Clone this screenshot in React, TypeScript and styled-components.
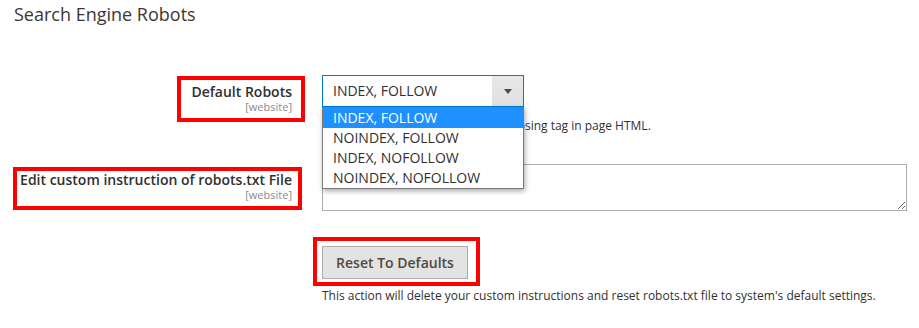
import styled, { createGlobalStyle } from "styled-components";

const GlobalStyle = createGlobalStyle`
    body {
        margin: 0;
        background: #fff;
        font-family: "Open Sans", "Liberation Sans", sans-serif;
        color: #303030;
    }
`;

const robotOptions = ["INDEX, FOLLOW", "NOINDEX, FOLLOW", "INDEX, NOFOLLOW", "NOINDEX, NOFOLLOW"];

const Page = styled.div`
    width: 919px;
    height: 328px;
    overflow: hidden;
    box-sizing: border-box;
`;

const SectionTitle = styled.h2`
    margin: 0;
    padding: 2px 0 0 14px;
    font-size: 18px;
    font-weight: 400;
    line-height: 25px;
    color: #41362f;
`;

const Fieldset = styled.div`
    display: flex;
    flex-direction: column;
    margin-top: 48px;
`;

const Row = styled.div<{ $top?: number }>`
    display: grid;
    grid-template-columns: 322px 585px;
    align-items: start;
    margin-top: ${(p) => p.$top || 0}px;
`;

const LabelCell = styled.div<{ $right: number; $offset: number }>`
    display: flex;
    justify-content: flex-end;
    padding-right: ${(p) => p.$right}px;
    margin-top: ${(p) => p.$offset}px;
`;

const Highlight = styled.div<{ $pad: string; $shift?: number }>`
    display: inline-flex;
    flex-direction: column;
    align-items: flex-end;
    border: 4px solid #ff0000;
    padding: ${(p) => p.$pad};
    margin-left: ${(p) => p.$shift || 0}px;
`;

const LabelText = styled.span`
    font-size: 14px;
    font-weight: 600;
    line-height: 18px;
    white-space: nowrap;
    color: #303030;
`;

const Scope = styled.span`
    font-size: 11px;
    line-height: 12px;
    color: #8a8a8a;
`;

const Control = styled.div`
    position: relative;
    display: flex;
    flex-direction: column;
    align-items: flex-start;
`;

const SelectBox = styled.div`
    display: flex;
    width: 202px;
    height: 32px;
    box-sizing: border-box;
    border: 1px solid #007bdb;
    background: #fff;
`;

const SelectValue = styled.span`
    flex: 1;
    padding-left: 10px;
    font-size: 14px;
    line-height: 30px;
    color: #303030;
`;

const SelectArrow = styled.span`
    width: 31px;
    display: flex;
    align-items: center;
    justify-content: center;
    background: linear-gradient(#e8e8e8, #e0e0e0);

    &::after {
        content: "";
        border-left: 4px solid transparent;
        border-right: 4px solid transparent;
        border-top: 5px solid #514943;
    }
`;

const OptionList = styled.ul`
    position: absolute;
    top: 32px;
    left: 0;
    width: 202px;
    box-sizing: border-box;
    margin: 0;
    padding: 0;
    list-style: none;
    background: #fff;
    border: 1px solid #7a7a7a;
    box-shadow: 1px 2px 5px rgba(0, 0, 0, 0.35);
    z-index: 2;
`;

const Option = styled.li<{ $active?: boolean }>`
    height: 20px;
    line-height: 20px;
    padding-left: 10px;
    font-size: 14px;
    color: ${(p) => (p.$active ? "#fff" : "#303030")};
    background: ${(p) => (p.$active ? "#1e90ff" : "transparent")};
`;

const Note = styled.div<{ $top: number }>`
    margin-top: ${(p) => p.$top}px;
    font-size: 12px;
    line-height: 17px;
    color: #303030;
    white-space: nowrap;
`;

const TextArea = styled.textarea`
    display: block;
    width: 585px;
    height: 47px;
    box-sizing: border-box;
    margin: 0;
    padding: 6px 10px;
    border: 1px solid #adadad;
    border-radius: 0;
    font-family: inherit;
    font-size: 14px;
    resize: vertical;
    outline: none;
`;

const Button = styled.button`
    width: 146px;
    height: 33px;
    box-sizing: border-box;
    padding: 0;
    border: 1px solid #adadad;
    border-radius: 0;
    background: #e3e3e3;
    color: #514943;
    font-family: inherit;
    font-size: 14px;
    font-weight: 600;
    line-height: 31px;
`;

export default function App() {
    return (
        <Page>
            <GlobalStyle />
            <SectionTitle>Search Engine Robots</SectionTitle>
            <Fieldset>
                <Row>
                    <LabelCell $right={17} $offset={1}>
                        <Highlight $pad="3px 9px 5px 10px">
                            <LabelText>Default Robots</LabelText>
                            <Scope>[website]</Scope>
                        </Highlight>
                    </LabelCell>
                    <Control>
                        <SelectBox role="combobox" aria-expanded="true">
                            <SelectValue>INDEX, FOLLOW</SelectValue>
                            <SelectArrow />
                        </SelectBox>
                        <OptionList role="listbox">
                            {robotOptions.map((item, i) => (
                                <Option key={item} $active={i === 0}>
                                    {item}
                                </Option>
                            ))}
                        </OptionList>
                        <Note $top={10}>This will be included before head closing tag in page HTML.</Note>
                    </Control>
                </Row>
                <Row $top={30}>
                    <LabelCell $right={20} $offset={3}>
                        <Highlight $pad="0 6px 5px 3px">
                            <LabelText>Edit custom instruction of robots.txt File</LabelText>
                            <Scope>[website]</Scope>
                        </Highlight>
                    </LabelCell>
                    <Control>
                        <TextArea defaultValue="" />
                    </Control>
                </Row>
                <Row $top={26}>
                    <div />
                    <Control>
                        <Highlight $pad="5px 8px 3px 5px" $shift={-9}>
                            <Button type="button">Reset To Defaults</Button>
                        </Highlight>
                        <Note $top={1}>
                            This action will delete your custom instructions and reset robots.txt file to system's default settings.
                        </Note>
                    </Control>
                </Row>
            </Fieldset>
        </Page>
    );
}
